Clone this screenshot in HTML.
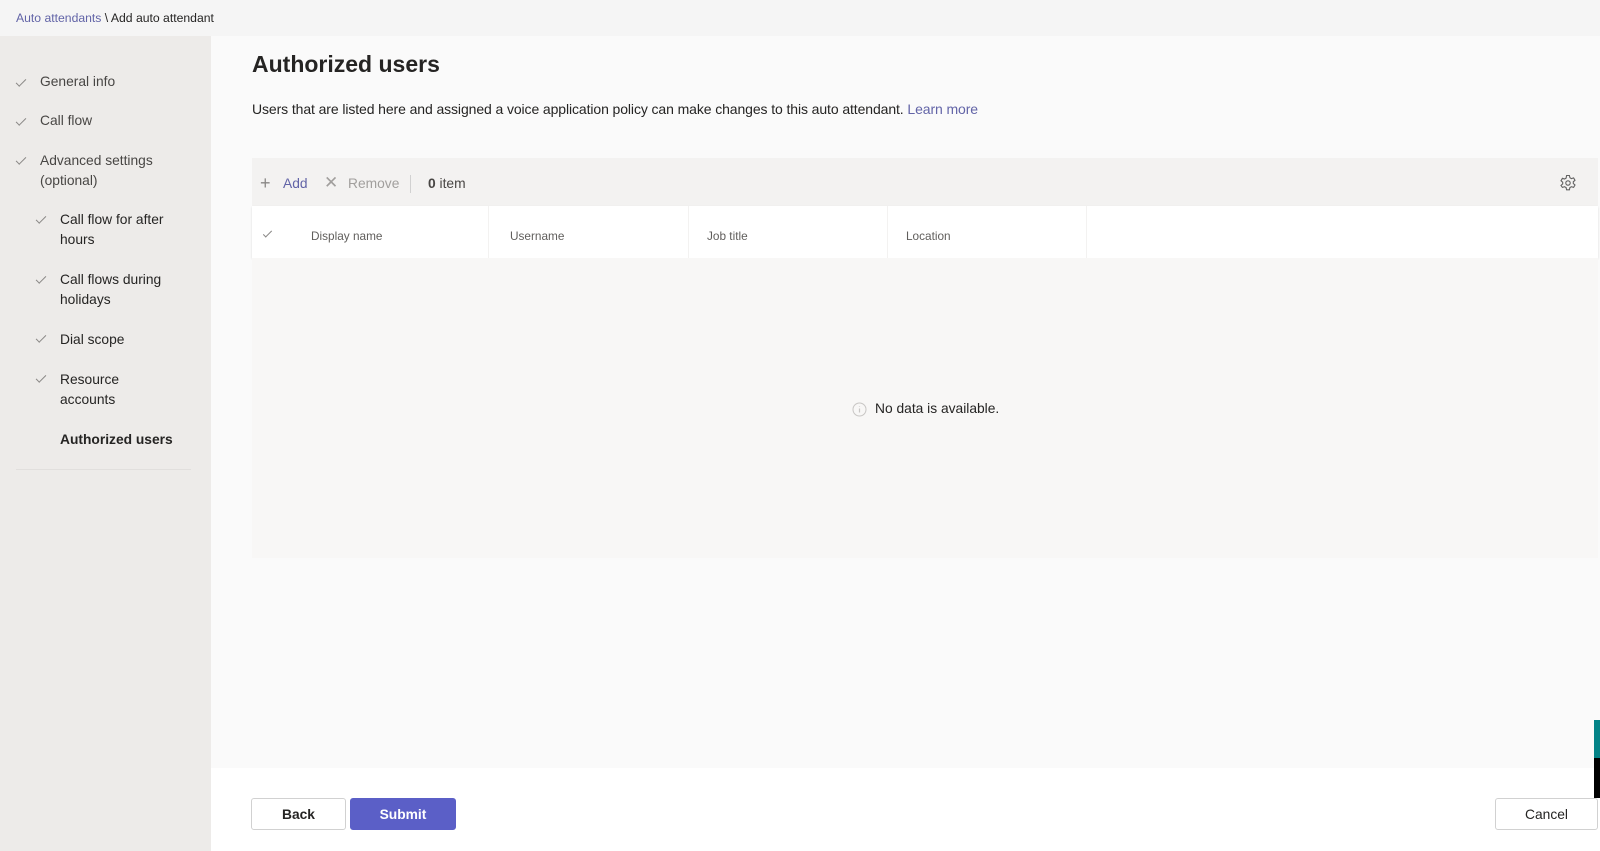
<!DOCTYPE html>
<html><head><meta charset="utf-8"><style>
*{margin:0;padding:0;box-sizing:border-box}
body{width:1600px;height:851px;overflow:hidden;background:#fafafa;font-family:"Liberation Sans",sans-serif;color:#252423;position:relative}
.top{position:absolute;left:0;top:0;width:1600px;height:36px;background:#f5f5f5;font-size:12.2px;padding:11px 0 0 16px}
.top a{color:#6264a7;text-decoration:none}
.side{position:absolute;left:0;top:36px;width:211px;height:815px;background:#edebe9}
.it{position:absolute;font-size:13.8px;line-height:20px;color:#484644}
.ck{position:absolute;width:10px;height:5px;border-left:1.3px solid #8a8886;border-bottom:1.3px solid #8a8886;transform:rotate(-45deg)}
.div{position:absolute;left:16px;top:433px;width:175px;height:1px;background:#e1dfdd}
h1{position:absolute;left:252px;top:51px;font-size:23px;font-weight:bold;color:#252423}
.desc{position:absolute;left:252px;top:101px;font-size:14px;letter-spacing:-0.1px}
.desc a{color:#6264a7;text-decoration:none}
.tb{position:absolute;left:252px;top:158px;width:1346px;height:48px;background:#f3f2f1;font-size:13.8px;color:#a19f9d}
.th{position:absolute;left:252px;top:206px;width:1346px;height:52px;background:#fff;box-shadow:0 1px 2px rgba(0,0,0,.12);font-size:11.8px;color:#605e5c}
.th span{position:absolute;top:23px}
.cd{position:absolute;top:0;width:1px;height:52px;background:#f3f2f1}
.empty{position:absolute;left:252px;top:258px;width:1346px;height:300px;background:#f8f7f6}
.foot{position:absolute;left:211px;top:768px;width:1389px;height:83px;background:#fff}
.btn{position:absolute;top:798px;height:32px;border:1px solid #d1d1d1;border-radius:3px;background:#fff;font-size:13.8px;font-weight:bold;text-align:center;line-height:31px;color:#252423}
</style></head><body>
<div class="top"><a>Auto attendants</a> \ Add auto attendant</div>
<div class="side">
<div class="ck" style="left:16px;top:43px"></div><div class="it" style="left:40px;top:36px">General info</div>
<div class="ck" style="left:16px;top:82px"></div><div class="it" style="left:40px;top:75px">Call flow</div>
<div class="ck" style="left:16px;top:121px"></div><div class="it" style="left:40px;top:115px">Advanced settings<br>(optional)</div>
<div class="ck" style="left:36px;top:180px"></div><div class="it" style="left:60px;top:174px;color:#252423">Call flow for after<br>hours</div>
<div class="ck" style="left:36px;top:240px"></div><div class="it" style="left:60px;top:234px;color:#252423">Call flows during<br>holidays</div>
<div class="ck" style="left:36px;top:299px"></div><div class="it" style="left:60px;top:294px;color:#252423">Dial scope</div>
<div class="ck" style="left:36px;top:339px"></div><div class="it" style="left:60px;top:334px;color:#252423">Resource<br>accounts</div>
<div class="it" style="left:60px;top:394px;font-weight:bold;color:#252423">Authorized users</div>
<div class="div"></div>
</div>
<h1>Authorized users</h1>
<div class="desc">Users that are listed here and assigned a voice application policy can make changes to this auto attendant. <a>Learn more</a></div>
<div class="tb">
<span style="position:absolute;left:8px;top:15px;font-size:18px;color:#8a8886;font-weight:300">+</span>
<span style="position:absolute;left:31px;top:18px;color:#6264a7">Add</span>
<span style="position:absolute;left:72px;top:15px;font-size:17px;color:#a19f9d">✕</span>
<span style="position:absolute;left:96px;top:18px">Remove</span>
<span style="position:absolute;left:158px;top:17px;width:1px;height:18px;background:#d1d1d1"></span>
<span style="position:absolute;left:176px;top:18px;color:#484644"><b>0</b> item</span>
<svg style="position:absolute;left:1307px;top:16px" width="18" height="18" viewBox="0 0 18 18" fill="none" stroke="#616161" stroke-width="1.1"><path d="M7.6 1.5h2.8l.5 2.2 1.5.9 2.2-.7 1.4 2.4-1.7 1.5v1.7l1.7 1.5-1.4 2.4-2.2-.7-1.5.9-.5 2.2H7.6l-.5-2.2-1.5-.9-2.2.7L2 11.4l1.7-1.5V8.2L2 6.7l1.4-2.4 2.2.7 1.5-.9z"/><circle cx="9" cy="9" r="2.2"/></svg>
</div>
<div class="th">
<div class="ck" style="left:11px;top:25px;width:9px;height:4px"></div>
<span style="left:59px">Display name</span>
<div class="cd" style="left:236px"></div><span style="left:258px">Username</span>
<div class="cd" style="left:436px"></div><span style="left:455px">Job title</span>
<div class="cd" style="left:635px"></div><span style="left:654px">Location</span>
<div class="cd" style="left:834px"></div>
</div>
<div class="empty">
<svg style="position:absolute;left:600px;top:144px" width="15" height="15" viewBox="0 0 15 15"><circle cx="7.5" cy="7.5" r="6.5" fill="none" stroke="#c8c6c4"/><path d="M7.5 6.5v4M7.5 4.2v.6" stroke="#c8c6c4" stroke-width="1.2"/></svg>
<span style="position:absolute;left:623px;top:143px;font-size:13.8px;color:#252423">No data is available.</span>
</div>
<div class="foot"></div>
<div class="btn" style="left:251px;width:95px">Back</div>
<div class="btn" style="left:350px;width:106px;background:#5b5fc7;border-color:#5b5fc7;color:#fff">Submit</div>
<div class="btn" style="left:1495px;width:103px;font-weight:normal">Cancel</div>
<div style="position:absolute;left:1594px;top:720px;width:6px;height:38px;background:#038387"></div>
<div style="position:absolute;left:1594px;top:758px;width:6px;height:40px;background:#000"></div>
</body></html>
